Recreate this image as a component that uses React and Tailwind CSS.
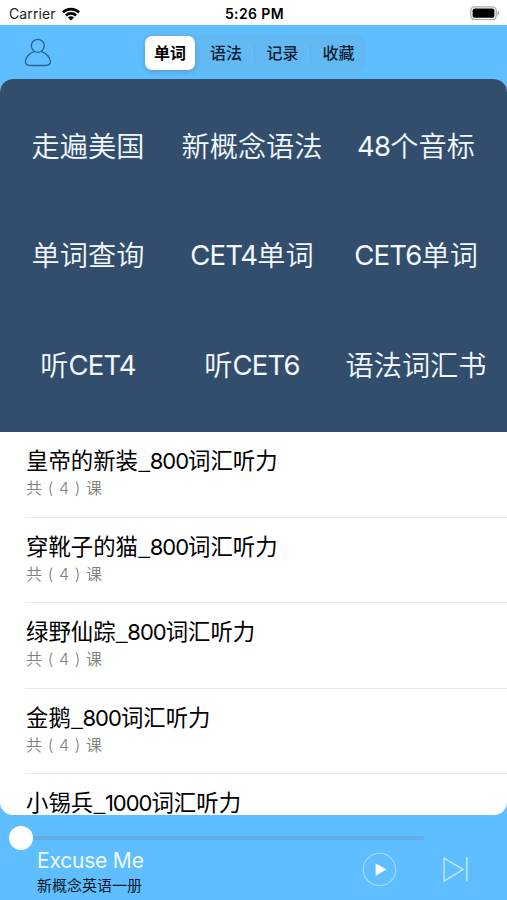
import React from 'react';

const tabs = ['单词', '语法', '记录', '收藏'];

const categories = [
  '走遍美国',
  '新概念语法',
  '48个音标',
  '单词查询',
  'CET4单词',
  'CET6单词',
  '听CET4',
  '听CET6',
  '语法词汇书'
];

const lessons = [
  { id: 1, title: '皇帝的新装_800词汇听力', count: 4 },
  { id: 2, title: '穿靴子的猫_800词汇听力', count: 4 },
  { id: 3, title: '绿野仙踪_800词汇听力', count: 4 },
  { id: 4, title: '金鹅_800词汇听力', count: 4 },
  { id: 5, title: '小锡兵_1000词汇听力' }
];

// Tightens the latin runs inside mixed titles, underscores use the wider CJK glyph
const MixedText = ({ text, className }) =>
  text.split(/(_|[A-Z0-9]+)/).map((part, index) => {
    if (part === '_') {
      return <span key={index} className="font-['Noto_Sans_CJK_SC',sans-serif] leading-none tracking-[-0.8px]">_</span>;
    }
    return /[A-Z0-9]/.test(part) ? (
      <span key={index} className={className}>{part}</span>
    ) : (
      part
    );
  });

const StatusBar = () => (
  <div className="grid h-[25px] shrink-0 grid-cols-3 items-center bg-white pl-[9px] pr-[7px] text-[14px] leading-none text-black">
    <div className="flex items-center gap-[6px] pt-[2px]">
      <span className="tracking-[0.1px] text-[#222]">Carrier</span>
      <svg className="h-[14px] w-[18px]" viewBox="0 0 18 14" fill="none" stroke="#000" strokeWidth="2.6">
        <path d="M0.9 5.4A11.6 11.6 0 0 1 17.1 5.4" />
        <path d="M3.9 8.5A7.3 7.3 0 0 1 14.1 8.5" />
        <path d="M9 13.6L5.9 10.5A4.4 4.4 0 0 1 12.1 10.5Z" fill="#000" stroke="none" />
      </svg>
    </div>
    <div className="pt-[2px] text-center font-semibold tracking-[0.4px]">5:26 PM</div>
    <svg className="h-[14px] w-[30px] justify-self-end" viewBox="0 0 30 14">
      <rect x="0.8" y="0.8" width="25.4" height="12.8" rx="3.8" fill="#fff" stroke="#a9a9a9" strokeWidth="1.3" />
      <rect x="2.6" y="2.6" width="21.8" height="9.2" rx="2" fill="#000" />
      <path d="M27.6 5v4.4c1-.4 1.7-1.2 1.7-2.2s-.7-1.8-1.7-2.2z" fill="#a9a9a9" />
    </svg>
  </div>
);

const Header = () => (
  <div className="flex h-[54px] shrink-0 items-start pl-[24px] pt-[9px]">
    <svg className="mt-[4px] h-[29px] w-[28px]" viewBox="0 0 28 29" fill="none" stroke="#2c618e" strokeWidth="1.3">
      <circle cx="13.8" cy="7.8" r="6.5" />
      <path d="M10 13.7C5 15.2 1.4 19.7 1.4 23.8C1.4 26.6 3.2 27.5 6 27.5H21.6C24.6 27.5 26.4 26.6 26.4 23.8C26.4 19.7 22.6 15.2 17.6 13.7" />
    </svg>
    <div className="ml-[91px] flex h-[38px] w-[223px] items-center rounded-[9px] bg-[#63b9f4] p-[2px] pb-[3px]">
      {tabs.map((tab, index) => (
        <button
          key={tab}
          className={
            index === 0
              ? 'h-[34px] w-[50px] shrink-0 rounded-[7px] bg-white text-[16px] font-bold text-black shadow-[0_2px_5px_rgba(0,0,0,0.15)]'
              : `flex h-[20px] w-[56px] shrink-0 items-center justify-center text-[16px] font-medium text-[#0d2233] ${
                  index === 1 ? 'ml-[3px]' : 'border-l border-[#5db1ea]'
                }`
          }
        >
          {tab}
        </button>
      ))}
    </div>
  </div>
);

const Player = () => (
  <div className="flex grow flex-col">
    <div className="flex h-[24px] items-center pl-[9px] pt-[22px]">
      <div className="h-[24px] w-[24px] shrink-0 rounded-full bg-white" />
      <div className="h-[4px] w-[391px] rounded-r-full bg-[#63aee4]" />
    </div>
    <div className="flex grow items-start">
      <div className="w-[325px] pl-[37px] pt-[9px]">
        <div className="text-[21px] leading-[26px] tracking-[-0.2px] text-[#effaff]">Excuse Me</div>
        <div className="text-[15px] leading-[24px] text-[#0c1a26]">新概念英语一册</div>
      </div>
      <svg className="ml-[37px] mt-[13px] h-[35px] w-[35px]" viewBox="0 0 35 35">
        <circle cx="17.5" cy="17.5" r="16.2" fill="none" stroke="#a9dcff" strokeWidth="1.1" />
        <path d="M13.6 11.4L24.6 17.6L13.6 23.8Z" fill="#fff" />
      </svg>
      <svg className="ml-[46px] mt-[17px] h-[27px] w-[27px]" viewBox="0 0 27 27" fill="none" stroke="#c9eaff" strokeWidth="1.4">
        <path d="M1.1 2.2V25L20 13.5Z" />
        <path d="M23.9 1.2V25.6" />
      </svg>
    </div>
  </div>
);

const App = () => {
  return (
    <div className="flex h-[900px] w-[507px] flex-col overflow-hidden bg-[#5fbeff] font-['Inter','Noto_Sans_CJK_SC',sans-serif]">
      <StatusBar />
      <Header />

      <div className="h-[736px] shrink-0 overflow-hidden rounded-[13px] bg-white">
        {/* Categories */}
        <div className="grid h-[353px] grid-cols-[repeat(3,164px)] grid-rows-[repeat(3,109.5px)] bg-[#334e6c] pl-[6px] pt-[13px]">
          {categories.map((name) => (
            <div key={name} className="flex items-center justify-center whitespace-nowrap text-[28.2px] font-[350] text-[#f4f9ff]">
              <span>
                <MixedText text={name} className="align-[1px] text-[27.5px] font-normal tracking-[-0.8px]" />
              </span>
            </div>
          ))}
        </div>

        {/* Lesson list */}
        <div className="pl-[25px]">
          {lessons.map((lesson) => (
            <div key={lesson.id} className="h-[85.6px] border-b border-[#e9e9e9] pl-px pt-[14px] last:border-b-0">
              <div className="h-[30px] text-[22.4px] leading-[30px] text-black">
                <MixedText text={lesson.title} className="text-[22px] tracking-[-1px]" />
              </div>
              {lesson.count && (
                <div className="text-[16px] font-[350] leading-[25px] tracking-[0.6px] text-[#808080]">共 ( {lesson.count} ) 课</div>
              )}
            </div>
          ))}
        </div>
      </div>

      <Player />
    </div>
  );
};

export default App;
